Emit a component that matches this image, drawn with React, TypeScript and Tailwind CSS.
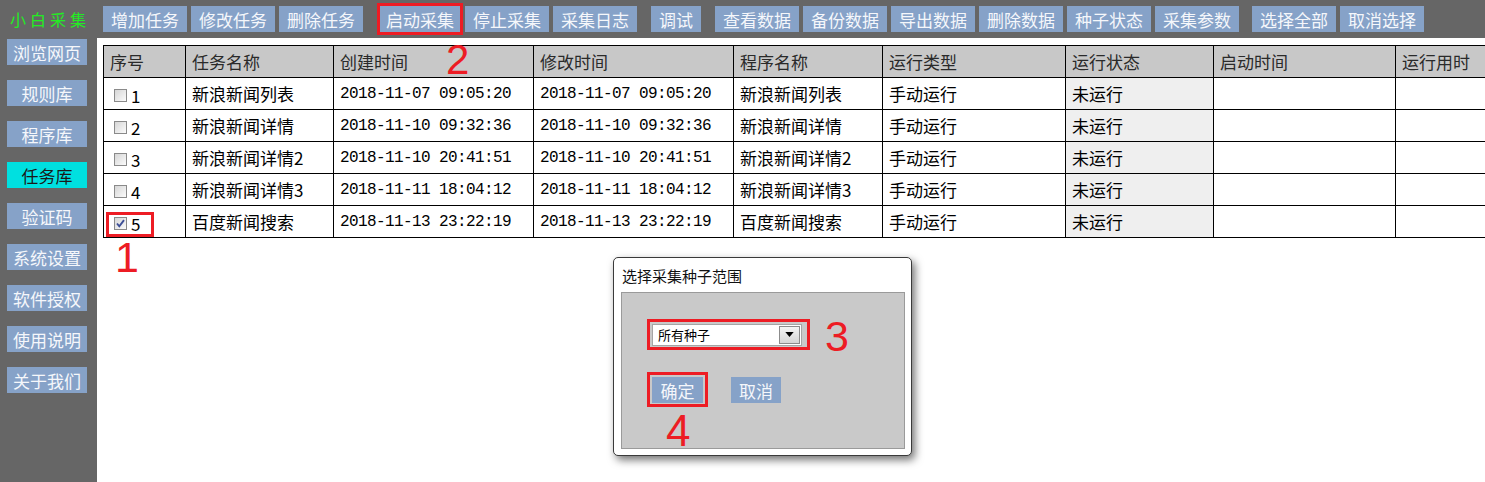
import React from "react";

const RED = "border-[#ed1c24]";

function TBtn({ label, w = "w-[84px]", cls = "" }: { label: string; w?: string; cls?: string }) {
  return (
    <div
      className={`${w} ${cls} h-[26px] shrink-0 bg-[#86a2c8] text-[#f5f7fb] text-[17px] leading-none flex items-center justify-center whitespace-nowrap`}
    >
      {label}
    </div>
  );
}

function Checkbox({ checked }: { checked?: boolean }) {
  return (
    <span className="inline-block w-[13px] h-[13px] border border-[#8a8a8a] bg-gradient-to-br from-[#d6d6d6] to-[#fbfbfb] relative shrink-0">
      {checked && (
        <svg viewBox="0 0 13 13" className="absolute -left-[1px] -top-[1px] w-[13px] h-[13px]">
          <path d="M3 6.5 L5.3 9.3 L10 3.2" fill="none" stroke="#3d4f97" strokeWidth="1.9" />
        </svg>
      )}
    </span>
  );
}

const rows = [
  { id: "1", name: "新浪新闻列表", c: "2018-11-07 09:05:20", m: "2018-11-07 09:05:20", p: "新浪新闻列表" },
  { id: "2", name: "新浪新闻详情", c: "2018-11-10 09:32:36", m: "2018-11-10 09:32:36", p: "新浪新闻详情" },
  { id: "3", name: "新浪新闻详情2", c: "2018-11-10 20:41:51", m: "2018-11-10 20:41:51", p: "新浪新闻详情2" },
  { id: "4", name: "新浪新闻详情3", c: "2018-11-11 18:04:12", m: "2018-11-11 18:04:12", p: "新浪新闻详情3" },
  { id: "5", name: "百度新闻搜索", c: "2018-11-13 23:22:19", m: "2018-11-13 23:22:19", p: "百度新闻搜索" },
];

const side = ["浏览网页", "规则库", "程序库", "任务库", "验证码", "系统设置", "软件授权", "使用说明", "关于我们"];

export default function App() {
  const td = "border border-black px-[6px] whitespace-nowrap overflow-hidden align-middle";
  const th = "border border-black px-[6px] whitespace-nowrap overflow-hidden align-middle text-left font-normal text-[#2a2a2a]";
  const mono = "font-['Liberation_Mono',monospace] text-[16px] tracking-[-0.6px]";
  return (
    <div className="w-[1485px] h-[482px] bg-[#666666] flex flex-col overflow-hidden font-['Noto_Sans_CJK_SC','Noto_Sans',sans-serif]">
      {/* header */}
      <div className="h-[38px] shrink-0 flex items-center">
        <div className="w-[103px] shrink-0 pl-[10px] text-[16px] leading-none tracking-[4px] text-[#22ee22]">小白采集</div>
        <TBtn label="增加任务" />
        <TBtn label="修改任务" cls="ml-[4px]" />
        <TBtn label="删除任务" cls="ml-[4px]" />
        <div className={`ml-[14px] w-[86px] h-[32px] border-[3px] ${RED} shrink-0`}>
          <TBtn label="启动采集" w="w-[80px]" />
        </div>
        <TBtn label="停止采集" cls="ml-[2px]" />
        <TBtn label="采集日志" cls="ml-[4px]" />
        <TBtn label="调试" w="w-[50px]" cls="ml-[14px]" />
        <TBtn label="查看数据" cls="ml-[14px]" />
        <TBtn label="备份数据" cls="ml-[4px]" />
        <TBtn label="导出数据" cls="ml-[4px]" />
        <TBtn label="删除数据" cls="ml-[4px]" />
        <TBtn label="种子状态" cls="ml-[4px]" />
        <TBtn label="采集参数" cls="ml-[4px]" />
        <TBtn label="选择全部" cls="ml-[13px]" />
        <TBtn label="取消选择" cls="ml-[4px]" />
      </div>

      <div className="flex flex-1 min-h-0">
        {/* sidebar */}
        <div className="w-[97px] shrink-0 flex flex-col gap-[15px] pt-[1px] pl-[7px]">
          {side.map((s) => (
            <div
              key={s}
              className={`w-[80px] h-[26px] flex items-center justify-center text-[17px] leading-none whitespace-nowrap ${
                s === "任务库" ? "bg-[#00e0e0] text-[#1a1a1a]" : "bg-[#86a2c8] text-[#f5f7fb]"
              }`}
            >
              {s}
            </div>
          ))}
        </div>

        {/* main */}
        <div className="flex-1 bg-white relative overflow-hidden pl-[6px] pt-[7px]">
          <table className="table-fixed border-collapse border border-black w-[1412px] text-[17px] leading-none text-black">
            <colgroup>
              <col className="w-[82px]" />
              <col className="w-[148px]" />
              <col className="w-[200px]" />
              <col className="w-[200px]" />
              <col className="w-[149px]" />
              <col className="w-[183px]" />
              <col className="w-[148px]" />
              <col className="w-[182px]" />
              <col className="w-[120px]" />
            </colgroup>
            <thead>
              <tr className="h-[32px] bg-[#c8c8c8]">
                <th className={th}>序号</th>
                <th className={th}>任务名称</th>
                <th className={th}>创建时间</th>
                <th className={th}>修改时间</th>
                <th className={th}>程序名称</th>
                <th className={th}>运行类型</th>
                <th className={th}>运行状态</th>
                <th className={th}>启动时间</th>
                <th className={th}>运行用时</th>
              </tr>
            </thead>
            <tbody>
              {rows.map((r) => (
                <tr key={r.id} className="h-[32px]">
                  <td className={`${td} pl-[10px]`}>
                    <span className="relative inline-flex items-center h-[13px] gap-[4px] align-middle">
                      <Checkbox checked={r.id === "5"} />
                      <span>{r.id}</span>
                      {r.id === "5" && (
                        <span className={`absolute left-[-8px] top-[-5px] w-[48px] h-[25px] border-[3px] ${RED}`} />
                      )}
                    </span>
                  </td>
                  <td className={td}>{r.name}</td>
                  <td className={`${td} ${mono}`}>{r.c}</td>
                  <td className={`${td} ${mono}`}>{r.m}</td>
                  <td className={td}>{r.p}</td>
                  <td className={td}>手动运行</td>
                  <td className={`${td} bg-[#efefef]`}>未运行</td>
                  <td className={td}></td>
                  <td className={td}></td>
                </tr>
              ))}
            </tbody>
          </table>

          {/* annotations */}
          <div className="absolute left-[349px] top-[1px] text-[42px] leading-none text-[#ed1c24] font-['Liberation_Sans',sans-serif]">2</div>
          <div className="absolute left-[18px] top-[198px] text-[43px] leading-none text-[#ed1c24] font-['Liberation_Sans',sans-serif]">1</div>

          {/* dialog */}
          <div className="absolute left-[516px] top-[219px] w-[299px] h-[199px] border border-[#3a3a3a] rounded-[5px] bg-white shadow-[3px_4px_9px_rgba(0,0,0,0.55)]">
            <div className="h-[34px] flex items-center pl-[8px] text-[15px] leading-none text-[#111]">选择采集种子范围</div>
            <div className="ml-[7px] w-[284px] h-[157px] border border-[#9a9a9a] bg-[#c9c9c9] pl-[25px] pt-[26px]">
              <div className={`w-[163px] h-[31px] border-[3px] ${RED} flex items-center pl-[2px]`}>
                <div className="w-[150px] h-[22px] border border-[#a5a5a5] bg-white flex items-center justify-between pl-[5px] pr-[1px]">
                  <span className="text-[13px] leading-none text-black">所有种子</span>
                  <span className="w-[21px] h-[18px] border border-[#8c8c8c] bg-gradient-to-b from-[#f4f4f4] to-[#d6d6d6] flex items-center justify-center">
                    <svg viewBox="0 0 10 6" className="w-[9px] h-[5px]">
                      <path d="M0 0 L10 0 L5 6 Z" fill="#000" />
                    </svg>
                  </span>
                </div>
              </div>
              <div className="flex items-start mt-[22px]">
                <div className={`w-[61px] h-[35px] border-[3px] ${RED} pl-[2px] pt-[2px]`}>
                  <div className="w-[51px] h-[26px] bg-[#86a2c8] text-[#f5f7fb] text-[17px] leading-none flex items-center justify-center">确定</div>
                </div>
                <div className="ml-[23px] mt-[5px] w-[50px] h-[26px] bg-[#86a2c8] text-[#f5f7fb] text-[17px] leading-none flex items-center justify-center">取消</div>
              </div>
            </div>
            <div className="absolute left-[211px] top-[57px] text-[43px] leading-none text-[#ed1c24] font-['Liberation_Sans',sans-serif]">3</div>
            <div className="absolute left-[52px] top-[151px] text-[44px] leading-none text-[#ed1c24] font-['Liberation_Sans',sans-serif]">4</div>
          </div>
        </div>
      </div>
    </div>
  );
}
